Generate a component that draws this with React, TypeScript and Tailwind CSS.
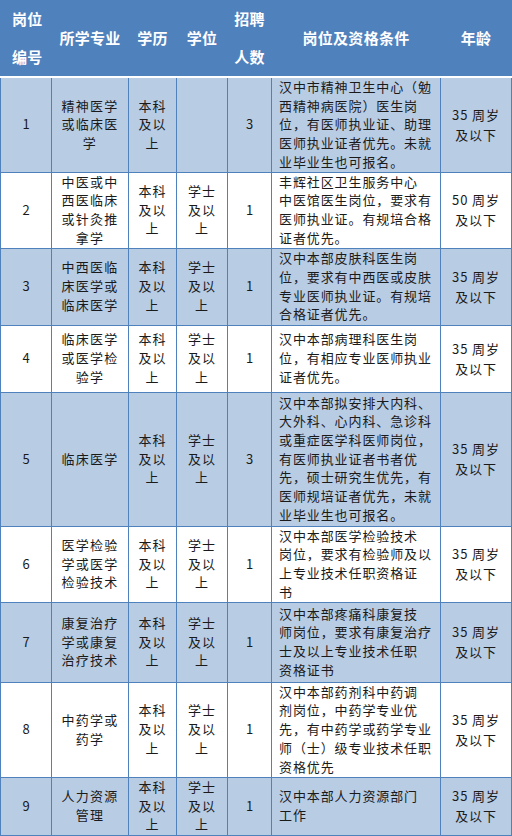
import React from "react";

type Row = {
  no: string;
  major: string[];
  edu: string[];
  degree: string[];
  count: string;
  cond: string[];
  age: string[];
  h: string;
  shaded: boolean;
};

const EDU = ["本科", "及以", "上"];
const DEG = ["学士", "及以", "上"];

const rows: Row[] = [
  {
    no: "1",
    major: ["精神医学", "或临床医", "学"],
    edu: EDU,
    degree: [],
    count: "3",
    cond: ["汉中市精神卫生中心（勉", "西精神病医院）医生岗", "位，有医师执业证、助理", "医师执业证者优先。未就", "业毕业生也可报名。"],
    age: ["35 周岁", "及以下"],
    h: "h-[95px]",
    shaded: true,
  },
  {
    no: "2",
    major: ["中医或中", "西医临床", "或针灸推", "拿学"],
    edu: EDU,
    degree: DEG,
    count: "1",
    cond: ["丰辉社区卫生服务中心", "中医馆医生岗位，要求有", "医师执业证。有规培合格", "证者优先。"],
    age: ["50 周岁", "及以下"],
    h: "h-[76px]",
    shaded: false,
  },
  {
    no: "3",
    major: ["中西医临", "床医学或", "临床医学"],
    edu: EDU,
    degree: DEG,
    count: "1",
    cond: ["汉中本部皮肤科医生岗", "位，要求有中西医或皮肤", "专业医师执业证。有规培", "合格证者优先。"],
    age: ["35 周岁", "及以下"],
    h: "h-[77px]",
    shaded: true,
  },
  {
    no: "4",
    major: ["临床医学", "或医学检", "验学"],
    edu: EDU,
    degree: DEG,
    count: "1",
    cond: ["汉中本部病理科医生岗", "位，有相应专业医师执业", "证者优先。"],
    age: ["35 周岁", "及以下"],
    h: "h-[67px]",
    shaded: false,
  },
  {
    no: "5",
    major: ["临床医学"],
    edu: EDU,
    degree: DEG,
    count: "3",
    cond: ["汉中本部拟安排大内科、", "大外科、心内科、急诊科", "或重症医学科医师岗位，", "有医师执业证者书者优", "先，硕士研究生优先，有", "医师规培证者优先，未就", "业毕业生也可报名。"],
    age: ["35 周岁", "及以下"],
    h: "h-[134px]",
    shaded: true,
  },
  {
    no: "6",
    major: ["医学检验", "学或医学", "检验技术"],
    edu: EDU,
    degree: DEG,
    count: "1",
    cond: ["汉中本部医学检验技术", "岗位，要求有检验师及以", "上专业技术任职资格证", "书"],
    age: ["35 周岁", "及以下"],
    h: "h-[76px]",
    shaded: false,
  },
  {
    no: "7",
    major: ["康复治疗", "学或康复", "治疗技术"],
    edu: EDU,
    degree: DEG,
    count: "1",
    cond: ["汉中本部疼痛科康复技", "师岗位，要求有康复治疗", "士及以上专业技术任职", "资格证书"],
    age: ["35 周岁", "及以下"],
    h: "h-[80px]",
    shaded: true,
  },
  {
    no: "8",
    major: ["中药学或", "药学"],
    edu: EDU,
    degree: DEG,
    count: "1",
    cond: ["汉中本部药剂科中药调", "剂岗位，中药学专业优", "先，有中药学或药学专业", "师（士）级专业技术任职", "资格优先"],
    age: ["35 周岁", "及以下"],
    h: "h-[95px]",
    shaded: false,
  },
  {
    no: "9",
    major: ["人力资源", "管理"],
    edu: EDU,
    degree: DEG,
    count: "1",
    cond: ["汉中本部人力资源部门", "工作"],
    age: ["35 周岁", "及以下"],
    h: "h-[58px]",
    shaded: true,
  },
];

function Lines({ lines }: { lines: string[] }) {
  return (
    <>
      {lines.map((l, i) => (
        <div key={i}>{l}</div>
      ))}
    </>
  );
}

export default function App() {
  const td = "border border-[#4f81bd] p-0 align-middle";
  const th = "border-x border-[#4f81bd] border-b-2 border-b-white p-0 font-bold";
  return (
    <div
      className="w-[512px] h-[836px] bg-white overflow-hidden"
      style={{ fontFamily: '"Noto Sans CJK SC", "Noto Sans", sans-serif' }}
    >
      <table className="table-fixed border-collapse w-[511px] text-[13px] text-[#1a1a1a] leading-[18.7px] tracking-[0.9px]">
        <colgroup>
          <col className="w-[51px]" />
          <col className="w-[77px]" />
          <col className="w-[48px]" />
          <col className="w-[51px]" />
          <col className="w-[44px]" />
          <col className="w-[169px]" />
          <col className="w-[71px]" />
        </colgroup>
        <thead>
          <tr className="h-[76px] bg-[#4f81bd] text-white font-bold text-[15px] tracking-[0.3px]">
            <th className={`${th} text-left pl-[11px]`}>
              <div className="leading-[38px]">岗位</div>
              <div className="leading-[38px]">编号</div>
            </th>
            <th className={th}>所学专业</th>
            <th className={th}>学历</th>
            <th className={th}>学位</th>
            <th className={th}>
              <div className="leading-[38px]">招聘</div>
              <div className="leading-[38px]">人数</div>
            </th>
            <th className={th}>岗位及资格条件</th>
            <th className={th}>年龄</th>
          </tr>
        </thead>
        <tbody>
          {rows.map((r) => (
            <tr key={r.no} className={`${r.h} ${r.shaded ? "bg-[#b8cce4]" : "bg-white"}`}>
              <td className={`${td} text-center tracking-normal`}>{r.no}</td>
              <td className={`${td} text-center tracking-[1.3px]`}>
                <Lines lines={r.major} />
              </td>
              <td className={`${td} text-center`}>
                <Lines lines={r.edu} />
              </td>
              <td className={`${td} text-center`}>
                <Lines lines={r.degree} />
              </td>
              <td className={`${td} text-center tracking-normal`}>{r.count}</td>
              <td className={`${td} text-left pl-[7px]`}>
                <Lines lines={r.cond} />
              </td>
              <td className={`${td} text-center leading-[20px]`}>
                <Lines lines={r.age} />
              </td>
            </tr>
          ))}
        </tbody>
      </table>
    </div>
  );
}
